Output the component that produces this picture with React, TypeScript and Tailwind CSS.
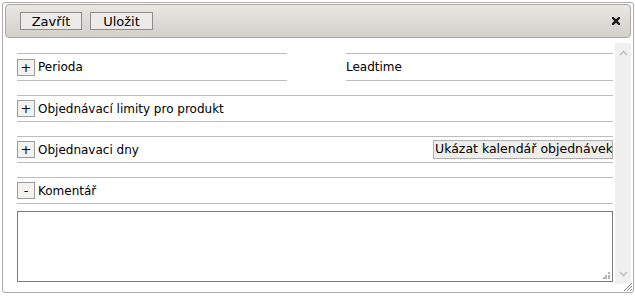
import { useState } from "react";

const font = { fontFamily: '"DejaVu Sans", Verdana, sans-serif' };

function Toggle({ open }: { open: boolean }) {
  return (
    <span className="w-[18px] h-[17px] shrink-0 border border-[#9c9c9c] bg-[#f3f2ef] flex items-end justify-center text-[13px] leading-none text-black pb-[1px]">
      {open ? "-" : "+"}
    </span>
  );
}

function Section({ label, open, className = "", children }: { label: string; open: boolean; className?: string; children?: React.ReactNode }) {
  return (
    <div className={`h-[27px] border-y border-[#bdbdbd] flex items-center ${className}`}>
      <Toggle open={open} />
      <span className="ml-[3px] text-[12px] text-black">{label}</span>
      {children}
    </div>
  );
}

function App() {
  const [note, setNote] = useState("");

  return (
    <div className="w-[635px] h-[296px] bg-white pl-[2px] pt-[2px] overflow-hidden" style={font}>
      <div className="relative w-[632px] h-[291px] border border-[#ababab] rounded-[3px] px-[2px] pt-[1px] flex flex-col">
        <div className="h-[34px] shrink-0 rounded-[4px] border border-[#a9a7a2] bg-gradient-to-b from-[#e9e7e3] to-[#d3d0ca] flex items-center pl-[14px] pr-[10px]">
          <button className="w-[62px] h-[18px] border border-[#8c8c8c] bg-[#ecebe7] text-[13px] leading-none text-black flex items-center justify-center">
            Zavřít
          </button>
          <button className="ml-[8px] w-[63px] h-[18px] border border-[#8c8c8c] bg-[#ecebe7] text-[13px] leading-none text-black flex items-center justify-center">
            Uložit
          </button>
          <svg className="ml-auto" width="8" height="8" viewBox="0 0 8 8">
            <path d="M1 1 L7 7 M7 1 L1 7" stroke="#1a1a1a" strokeWidth="2.4" strokeLinecap="square" />
          </svg>
        </div>

        <div className="flex flex-1 min-h-0">
          <div className="flex-1 flex flex-col pl-[12px]">
            <div className="mt-[15px] flex">
              <Section label="Perioda" open={false} className="w-[270px] h-[28px]" />
              <div className="ml-[59px] flex-1 h-[28px] border-y border-[#bdbdbd] flex items-center">
                <span className="text-[12px] text-black">Leadtime</span>
              </div>
            </div>
            <Section label="Objednávací limity pro produkt" open={false} className="mt-[14px]" />
            <Section label="Objednavaci dny" open={false} className="mt-[14px]">
              <button className="ml-auto w-[180px] h-[19px] border border-[#b0b0b0] bg-[#eeedea] text-[12.5px] leading-none text-black text-left pl-[1px] whitespace-nowrap overflow-hidden">
                Ukázat kalendář objednávek
              </button>
            </Section>
            <Section label="Komentář" open={true} className="mt-[14px]" />
            <div className="relative mt-[7px] h-[71px]">
              <textarea
                value={note}
                onChange={(e) => setNote(e.target.value)}
                className="w-full h-full border border-[#7a7a7a] resize-none outline-none text-[12px] p-1"
              />
              <svg className="absolute right-[3px] bottom-[3px]" width="7" height="7" viewBox="0 0 7 7">
                <rect x="5" y="0" width="2" height="2" fill="#b5b5b5" />
                <rect x="2" y="3" width="2" height="2" fill="#b5b5b5" />
                <rect x="5" y="3" width="2" height="2" fill="#b5b5b5" />
                <rect x="0" y="5" width="2" height="2" fill="#b5b5b5" />
                <rect x="2" y="5" width="2" height="2" fill="#b5b5b5" />
                <rect x="5" y="5" width="2" height="2" fill="#b5b5b5" />
              </svg>
            </div>
          </div>

          <div className="w-[16px] ml-[2px] mt-[5px] mb-[8px] bg-[#f0f0f0] flex flex-col items-center justify-between py-[7px]">
            <svg width="9" height="6" viewBox="0 0 9 6">
              <path d="M1 5 L4.5 1.5 L8 5" stroke="#c2c2c2" strokeWidth="1.6" fill="none" />
            </svg>
            <svg width="9" height="6" viewBox="0 0 9 6">
              <path d="M1 1 L4.5 4.5 L8 1" stroke="#c2c2c2" strokeWidth="1.6" fill="none" />
            </svg>
          </div>
        </div>

        <svg className="absolute right-[1px] bottom-[1px]" width="10" height="10" viewBox="0 0 10 10">
          <path d="M10 2 L2 10 M10 5 L5 10 M10 8 L8 10" stroke="#7d7d7d" strokeWidth="1" />
        </svg>
      </div>
    </div>
  );
}

export default App;
